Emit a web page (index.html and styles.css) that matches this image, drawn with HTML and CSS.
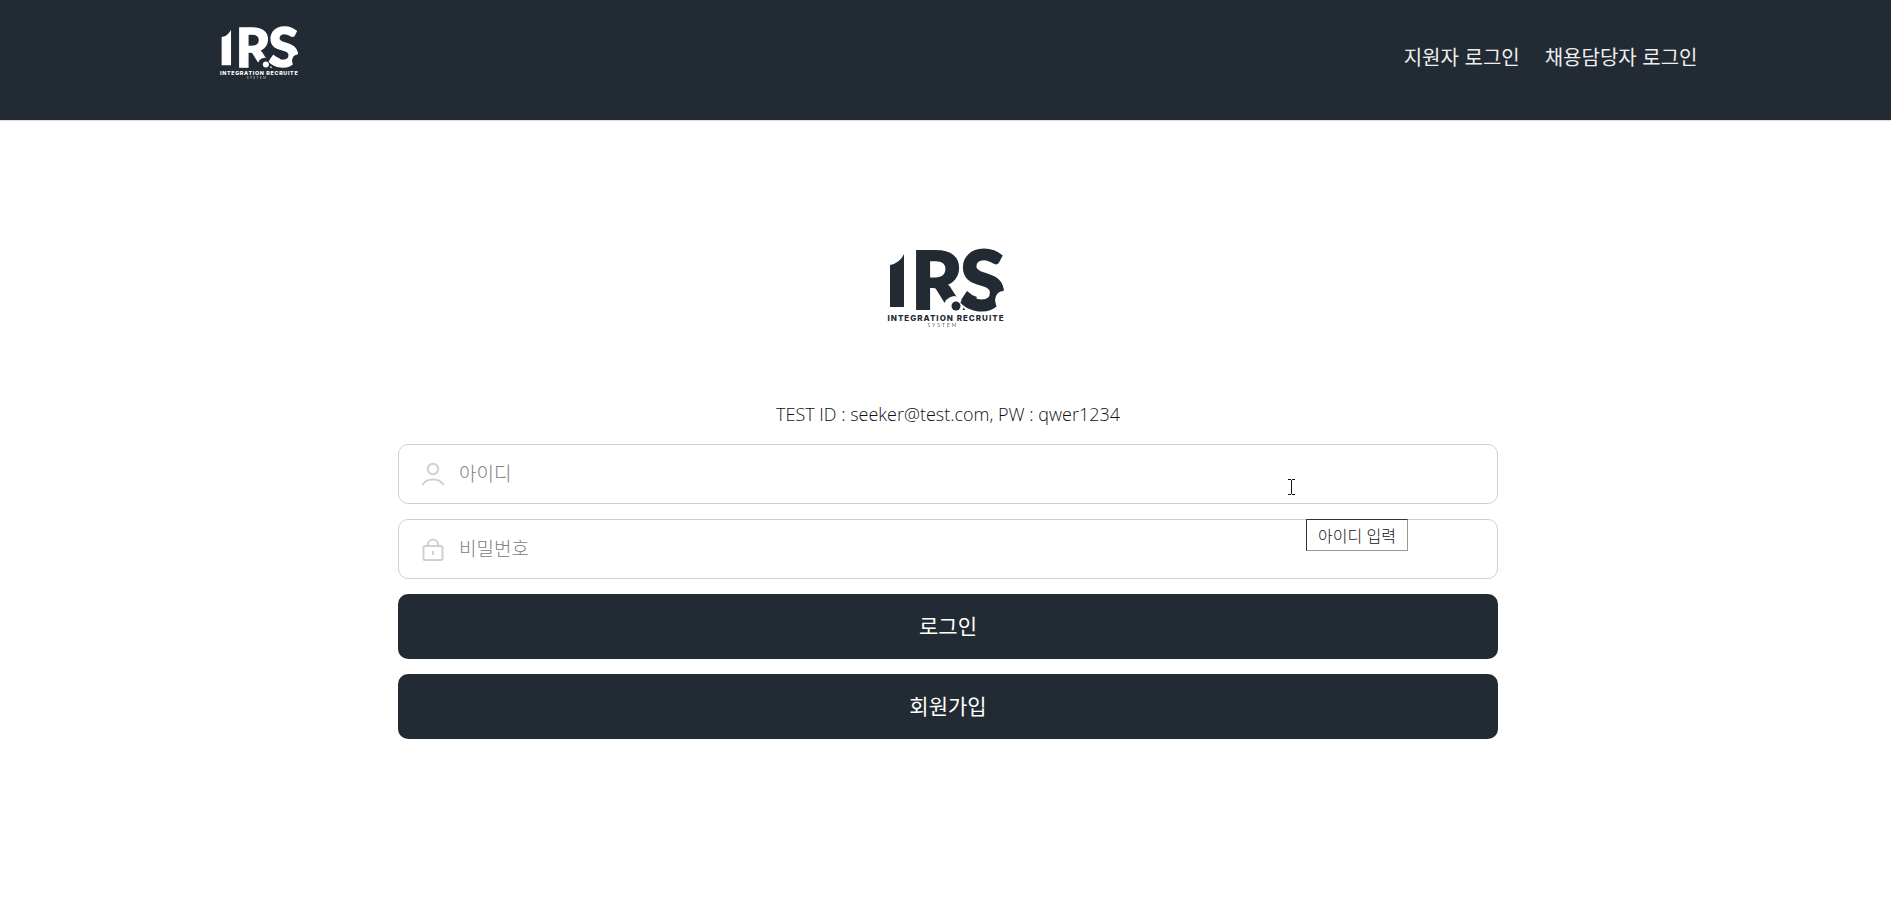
FILE: index.html
```html
<!DOCTYPE html>
<html lang="ko">
<head>
<meta charset="utf-8">
<title>IRS 로그인</title>
<link rel="stylesheet" href="styles.css">
</head>
<body>
<svg class="defs" aria-hidden="true">
  <defs>
    <mask id="cut-r" maskUnits="userSpaceOnUse" x="0" y="0" width="150" height="100">
      <rect width="150" height="100" fill="#fff"/>
      <path d="M70 80L73 73Q75 62 84 61L98 64L90 80Z" fill="#000"/>
    </mask>
    <mask id="cut-s" maskUnits="userSpaceOnUse" x="0" y="0" width="150" height="100">
      <rect width="150" height="100" fill="#fff"/>
      <path d="M140 54L134 56Q126 56 125 65L126 70L131 79L144 79Z" fill="#000"/>
    </mask>
    <symbol id="logo" viewBox="0 0 150 100">
      <g fill="currentColor">
        <path d="M20 30Q30 28 34 19V72H20Z"/>
        <g mask="url(#cut-r)"><text class="logo-letter letter-r" x="41" y="74">R</text></g>
        <g mask="url(#cut-s)">
          <text class="logo-letter" x="90" y="75">S</text>
          <path d="M97 56Q101 60 107 62L101 73L91 65Z"/>
        </g>
        <path d="M121 47Q132 44 134 55Q127 55 125 61Z"/>
        <circle cx="86" cy="71" r="4.5"/>
        <text class="logo-name" x="76" y="86">INTEGRATION RECRUITE</text>
        <text class="logo-sub" x="73" y="92">SYSTEM</text>
      </g>
    </symbol>
  </defs>
</svg>
<header class="header">
  <div class="header-inner">
    <a class="brand" href="#" aria-label="IRS"><svg class="logo-small"><use href="#logo"/></svg></a>
    <nav class="nav">
      <a href="#">지원자 로그인</a>
      <a href="#">채용담당자 로그인</a>
    </nav>
  </div>
</header>
<main class="main">
  <svg class="logo-large" role="img" aria-label="IRS"><use href="#logo"/></svg>
  <form class="form">
    <p class="hint">TEST ID : seeker@test.com, PW : qwer1234</p>
    <div class="field">
      <svg class="icon" viewBox="0 0 24 24"><circle cx="12" cy="7" r="5.2"/><path d="M1.5 23C5 15.500 19 15.500 22.500 23"/></svg>
      <input type="text" aria-label="아이디" placeholder="아이디">
      <svg class="cursor" viewBox="0 0 7 16"><path d="M0 .5H3M4 .5H7M3.500 1V15M0 15.500H3M4 15.500H7"/></svg>
      <span class="tooltip" role="tooltip">아이디 입력</span>
    </div>
    <div class="field">
      <svg class="icon" viewBox="0 0 24 24"><rect x="2.500" y="9" width="19" height="14" rx="1.500"/><path d="M7 9V7.500A5 5 0 0 1 17 7.500V9M12 14V18"/></svg>
      <input type="password" aria-label="비밀번호" placeholder="비밀번호">
    </div>
    <button class="button" type="submit">로그인</button>
    <button class="button" type="button">회원가입</button>
  </form>
</main>
</body>
</html>
```
FILE: styles.css
```css
* { box-sizing: border-box; }
body {
  margin: 0;
  background: #fff;
  color: #111;
  font-family: "Noto Sans CJK KR", sans-serif;
}
.defs { position: absolute; width: 0; height: 0; }
.header {
  height: 120px;
  background: #222b34;
  box-shadow: 0 1px #dcdee0;
}
.header-inner {
  display: flex;
  justify-content: space-between;
  max-width: 1504px;
  margin: 0 auto;
  padding: 17px 0 0 14px;
}
.brand { color: #fff; }
.logo-small { display: block; width: 101px; height: 67px; }
.nav {
  display: flex;
  gap: 25px;
  padding: 25px 0 0;
}
.nav a {
  color: #eee;
  font-size: 20px;
  font-weight: 400;
  line-height: 30px;
  text-decoration: none;
}
.main {
  display: flex;
  flex-direction: column;
  align-items: center;
  padding: 115px 0 0 5px;
}
.logo-large {
  width: 150px;
  height: 100px;
  margin-right: 6px;
  color: #222b34;
}
.logo-letter {
  font-family: Lato, sans-serif;
  font-size: 82px;
  font-weight: 900;
  stroke: currentColor;
  stroke-width: 2px;
}
.letter-r { font-size: 80px; }
.logo-name {
  font-family: Inter, sans-serif;
  font-size: 8px;
  font-weight: 800;
  letter-spacing: 1px;
  text-anchor: middle;
}
.logo-sub {
  font-family: Lato, sans-serif;
  font-size: 5px;
  letter-spacing: 2px;
  text-anchor: middle;
  opacity: .7;
}
.form {
  display: flex;
  flex-direction: column;
  gap: 15px;
  width: 100%;
  max-width: 1100px;
  padding-top: 64px;
}
.hint {
  margin: 0;
  font-family: "Open Sans", sans-serif;
  font-size: 18px;
  font-weight: 300;
  line-height: 30px;
  text-align: center;
}
.field {
  position: relative;
  display: flex;
  align-items: center;
  gap: 14px;
  height: 60px;
  padding: 0 22px;
  border: 1px solid #d0d0d0;
  border-radius: 10px;
}
.icon {
  flex: none;
  width: 24px;
  height: 24px;
  fill: none;
  stroke: #d0d0d0;
  stroke-width: 2;
}
.field input {
  flex: 1;
  min-width: 0;
  height: 58px;
  padding: 0 0 3px;
  border: 0;
  outline: 0;
  background: none;
  color: #212529;
  font: 300 19px "Noto Sans CJK KR", sans-serif;
}
.field input::placeholder { color: #808080; opacity: 1; }
.cursor {
  position: absolute;
  top: 34px;
  right: 202px;
  width: 7px;
  height: 16px;
  stroke: #111;
}
.tooltip {
  position: absolute;
  z-index: 1;
  top: 74px;
  right: 89px;
  width: 102px;
  border: 1px solid #333;
  border-right-color: #999;
  border-bottom-color: #999;
  background: #fff;
  font-size: 16px;
  font-weight: 300;
  line-height: 30px;
  text-align: center;
}
.button {
  height: 65px;
  padding: 0 0 3px;
  border: 0;
  border-radius: 10px;
  background: #222b34;
  color: #fff;
  font: 400 21px "Noto Sans CJK KR", sans-serif;
}
```
